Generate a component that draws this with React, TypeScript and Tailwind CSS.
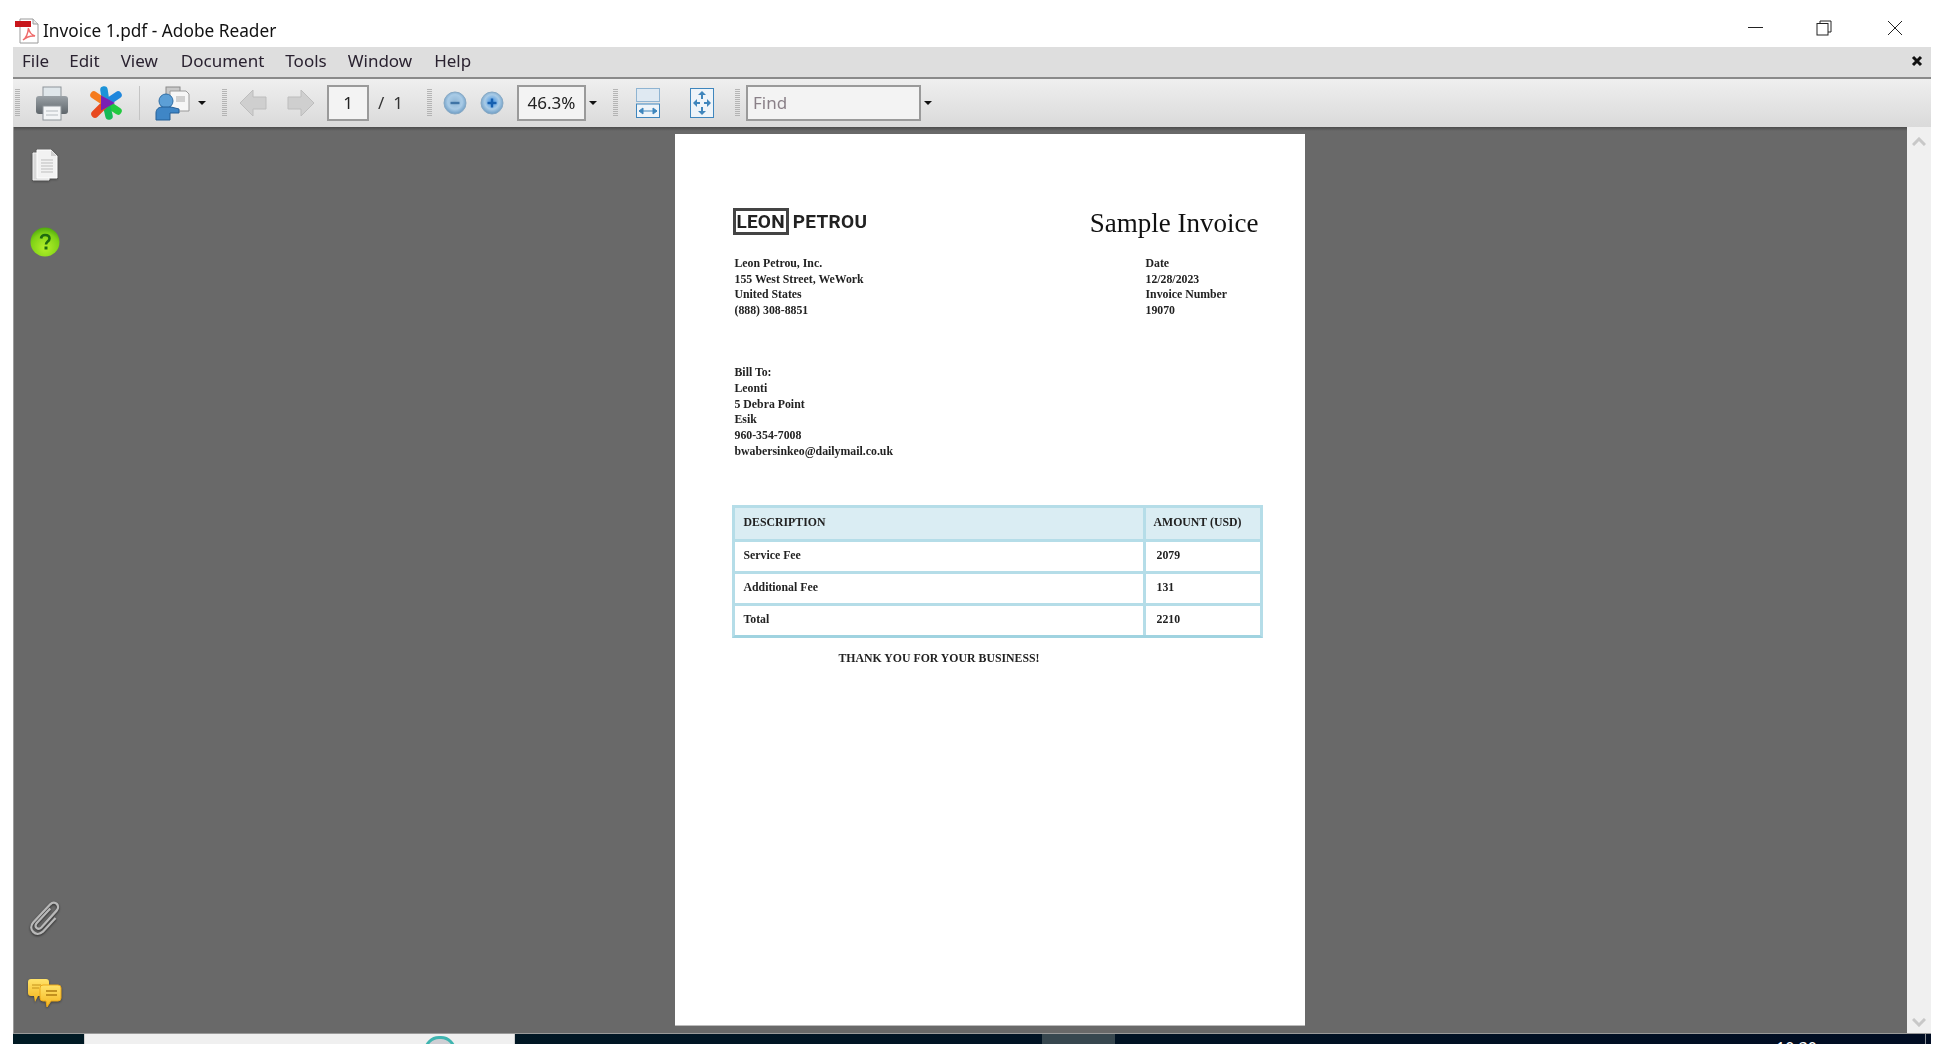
import { ReactNode } from "react";

const UI_FONT = "font-['Noto_Sans','Open_Sans',sans-serif]";
const DOC_FONT = "font-['Liberation_Serif',serif]";

const MENU_ITEMS = [
  { label: "File", margin: "ml-[9px]" },
  { label: "Edit", margin: "ml-[20px]" },
  { label: "View", margin: "ml-[21px]" },
  { label: "Document", margin: "ml-[23px]" },
  { label: "Tools", margin: "ml-[21px]" },
  { label: "Window", margin: "ml-[21px]" },
  { label: "Help", margin: "ml-[22px]" }
];

const SENDER_LINES = ["Leon Petrou, Inc.", "155 West Street, WeWork", "United States", "(888) 308-8851"];
const META_LINES = ["Date", "12/28/2023", "Invoice Number", "19070"];
const BILL_LINES = ["Bill To:", "Leonti", "5 Debra Point", "Esik", "960-354-7008", "bwabersinkeo@dailymail.co.uk"];
const FEE_ROWS = [
  { label: "Service Fee", amount: "2079" },
  { label: "Additional Fee", amount: "131" },
  { label: "Total", amount: "2210" }
];

const STAR_PETALS = [
  { x: 15, y: 4, color: "#1c93d8" },
  { x: 29, y: 9, color: "#1f86dc" },
  { x: 29, y: 25, color: "#22c93f" },
  { x: 20, y: 30, color: "#16b956" },
  { x: 6, y: 28, color: "#e8491f" },
  { x: 5, y: 9, color: "#f57c1f" }
];

function Grip({ className }: { className: string }) {
  return (
    <span
      className={`h-[27px] w-[5px] shrink-0 bg-[repeating-linear-gradient(0deg,#a8a8a8_0_1px,transparent_1px_2px)] opacity-80 ${className}`}
    />
  );
}

function Caret({ className }: { className: string }) {
  return <span className={`h-0 w-0 shrink-0 border-x-[4px] border-t-[4px] border-x-transparent border-t-[#111] ${className}`} />;
}

function PdfIcon() {
  return (
    <svg width="25" height="26" viewBox="0 0 25 26" className="shrink-0">
      <path d="M5 1h13l5 5v19H5z" fill="#fff" stroke="#9a9a9a" />
      <path d="M18 1v5h5" fill="#e8e8e8" stroke="#9a9a9a" />
      <rect x="0" y="3" width="16" height="6" fill="#c8151b" />
      <path
        d="M8 22c3-2 5-7 5.500-12 .5 4 2.500 6.500 6.500 8-4-.5-8 .5-12 4z"
        fill="none"
        stroke="#ef6b6b"
        strokeWidth="1.500"
      />
    </svg>
  );
}

function PrinterIcon() {
  return (
    <svg width="34" height="36" viewBox="0 0 34 36" className="ml-[15px] shrink-0">
      <defs>
        <linearGradient id="printerBody" x1="0" y1="0" x2="0" y2="1">
          <stop offset="0" stopColor="#9aa1a6" />
          <stop offset="1" stopColor="#5f666b" />
        </linearGradient>
      </defs>
      <rect x="8" y="2" width="18" height="12" fill="#dfe6ea" stroke="#8d9499" />
      <path d="M4 11h26a3 3 0 0 1 3 3v12a3 3 0 0 1-3 3H4a3 3 0 0 1-3-3V14a3 3 0 0 1 3-3z" fill="url(#printerBody)" />
      <rect x="8" y="21" width="18" height="14" fill="#f3f5f6" stroke="#8d9499" />
      <path d="M11 26h12M11 30h12" stroke="#b5bbbf" />
    </svg>
  );
}

function StarIcon() {
  return (
    <svg width="34" height="34" viewBox="0 0 34 34" className="ml-[20px] shrink-0">
      {STAR_PETALS.map((petal) => (
        <path
          key={petal.color}
          d={`M17 17L${petal.x} ${petal.y}`}
          stroke={petal.color}
          strokeWidth="7.500"
          strokeLinecap="round"
        />
      ))}
      <path d="M12 9.500 26 17l-14 7.500z" fill="#7a1fb4" />
    </svg>
  );
}

function ShareIcon() {
  return (
    <svg width="35" height="37" viewBox="0 0 35 37" className="ml-[15px] shrink-0">
      <rect x="11" y="3" width="14" height="9" fill="#c9c9c9" stroke="#8a8a8a" />
      <path d="M15 7h16l3 3v17H15z" fill="#f6f6f6" stroke="#9a9a9a" />
      <rect x="21" y="12" width="9" height="6" fill="#d0d0d0" />
      <circle cx="11" cy="17" r="7" fill="#5c9fd6" stroke="#2f6ea6" />
      <path d="M1 36v-7c0-4 3-6 6-6h9l8 2v4h-9v7z" fill="#3f86c6" stroke="#245f96" />
    </svg>
  );
}

function ArrowIcon({ flip, className }: { flip?: boolean; className: string }) {
  return (
    <svg
      width="28"
      height="28"
      viewBox="0 0 28 28"
      className={`shrink-0 ${flip ? "-scale-x-100" : ""} ${className}`}
    >
      <path d="M1 14 14 1v7h13v12H14v7z" fill="#cfcfcf" stroke="#bdbdbd" />
    </svg>
  );
}

function ZoomIcon({ plus, className }: { plus?: boolean; className: string }) {
  const gradientId = plus ? "zoomPlus" : "zoomMinus";
  return (
    <svg width="24" height="24" viewBox="0 0 24 24" className={`shrink-0 ${className}`}>
      <defs>
        <radialGradient id={gradientId} cx="0.5" cy="0.45" r="0.55">
          <stop offset="0" stopColor={plus ? "#3f8fe0" : "#8fb6d6"} />
          <stop offset="0.6" stopColor="#a9cbe6" />
          <stop offset="1" stopColor="#6d9cc4" />
        </radialGradient>
      </defs>
      <circle cx="12" cy="12" r="11" fill={`url(#${gradientId})`} stroke="#88a9c4" />
      <rect x="7.500" y="10.800" width="9" height="2.400" fill={plus ? "#155fb0" : "#3f74a6"} />
      {plus && <rect x="10.800" y="7.500" width="2.400" height="9" fill="#155fb0" />}
    </svg>
  );
}

function FitWidthIcon() {
  return (
    <svg width="24" height="30" viewBox="0 0 24 30" className="ml-[18px] shrink-0">
      <rect x="0.500" y="0.500" width="23" height="13" fill="#dfe9f2" stroke="#8fb4d2" />
      <rect x="0.500" y="16" width="23" height="13.500" fill="#eef4f9" stroke="#3f86bd" />
      <path d="M3 23h18M3 23l4-3v6zM21 23l-4-3v6z" fill="#3f86bd" stroke="#3f86bd" />
    </svg>
  );
}

function FitPageIcon() {
  return (
    <svg width="24" height="30" viewBox="0 0 24 30" className="ml-[30px] shrink-0">
      <rect x="0.500" y="0.500" width="23" height="29" fill="#eef4f9" stroke="#3f86bd" />
      <path
        d="M12 3l-4 4h3v4h2V7h3zM12 27l-4-4h3v-4h2v4h3zM3 15l4-4v3h3v2H7v3zM21 15l-4-4v3h-3v2h3v3z"
        fill="#3f86bd"
      />
    </svg>
  );
}

function Toolbar() {
  return (
    <div className="flex h-[48px] shrink-0 items-center bg-gradient-to-b from-[#efefef] to-[#dadada] pb-[1px] pl-[2px]">
      <Grip className="" />
      <PrinterIcon />
      <StarIcon />
      <span className="ml-[16px] h-[34px] w-px shrink-0 bg-[#c4c4c4]" />
      <ShareIcon />
      <Caret className="ml-[8px]" />
      <Grip className="ml-[16px]" />
      <ArrowIcon className="ml-[12px]" />
      <ArrowIcon flip className="ml-[20px]" />
      <span className="ml-[12px] flex h-[36px] w-[42px] shrink-0 items-center justify-center border-2 border-[#9a9a9a] bg-[#f3f3f3] text-[17px] text-[#222]">
        1
      </span>
      <span className="ml-[9px] w-[28px] shrink-0 whitespace-nowrap text-[17px] text-[#333]">/&nbsp;&nbsp;1</span>
      <Grip className="ml-[21px]" />
      <ZoomIcon className="ml-[11px]" />
      <ZoomIcon plus className="ml-[13px]" />
      <span className="ml-[13px] flex h-[36px] w-[69px] shrink-0 items-center justify-center border-2 border-[#9a9a9a] bg-[#f3f3f3] text-[17px] text-[#222]">
        46.3%
      </span>
      <Caret className="ml-[3px]" />
      <Grip className="ml-[16px]" />
      <FitWidthIcon />
      <FitPageIcon />
      <Grip className="ml-[21px]" />
      <span className="ml-[6px] flex h-[36px] w-[175px] shrink-0 items-center border-2 border-[#9a9a9a] bg-[#f3f3f3] pl-[5px] text-[17px] text-[#8a8088]">
        Find
      </span>
      <Caret className="ml-[3px]" />
    </div>
  );
}

function DocumentsIcon() {
  return (
    <svg width="26" height="32" viewBox="0 0 26 32" className="drop-shadow-[0_1px_1px_rgba(0,0,0,0.4)]">
      <path d="M1 4h16v27H1z" fill="#d8d8d8" stroke="#f4f4f4" />
      <path d="M5 1h14l6 6v22H5z" fill="#f2f2f2" stroke="#fff" />
      <path d="M19 1v6h6z" fill="#cfcfcf" />
      <path d="M9 11h12M9 14h12M9 17h12M9 20h12M9 23h12" stroke="#bdbdbd" />
    </svg>
  );
}

function HelpIcon() {
  return (
    <svg width="30" height="30" viewBox="0 0 30 30">
      <defs>
        <radialGradient id="helpGreen" cx="0.5" cy="0.7" r="0.7">
          <stop offset="0" stopColor="#b4f02a" />
          <stop offset="0.7" stopColor="#7fd216" />
          <stop offset="1" stopColor="#4fa80e" />
        </radialGradient>
      </defs>
      <circle cx="15" cy="15" r="14.500" fill="url(#helpGreen)" />
      <path
        d="M11 11.500c.4-2.500 2.200-3.500 4-3.500 2.700 0 4.500 1.500 4.500 3.500 0 3.200-3.500 3-3.500 6"
        fill="none"
        stroke="#1f6a10"
        strokeWidth="2.600"
      />
      <rect x="14.500" y="19.500" width="3" height="3" fill="#1f6a10" />
    </svg>
  );
}

function ClipIcon() {
  return (
    <svg width="34" height="40" viewBox="0 0 32 38" className="drop-shadow-[0_1px_1px_rgba(0,0,0,0.6)]">
      <path
        d="M21 10 8 24c-3 3.500 1.500 7 4.500 4L27 12c4-4.500-1.500-10.500-6-6L5 23c-6 6.500 2.500 15 9 9l12-13"
        fill="none"
        stroke="#b8b8b8"
        strokeWidth="2.200"
      />
    </svg>
  );
}

function ChatIcon() {
  return (
    <svg width="34" height="29" viewBox="0 0 34 29" className="drop-shadow-[0_1px_1px_rgba(0,0,0,0.4)]">
      <defs>
        <linearGradient id="chatFill" x1="0" y1="0" x2="0" y2="1">
          <stop offset="0" stopColor="#ffe36a" />
          <stop offset="1" stopColor="#f4b51e" />
        </linearGradient>
      </defs>
      <path d="M3 0h15a3 3 0 0 1 3 3v11a3 3 0 0 1-3 3H10l-3 6-1-6H3a3 3 0 0 1-3-3V3a3 3 0 0 1 3-3z" fill="url(#chatFill)" />
      <path d="M4 6h9M4 9h7" stroke="#c4921a" />
      <path d="M15 6h15a3 3 0 0 1 3 3v10a3 3 0 0 1-3 3h-7l-4 6-1-6h-3a3 3 0 0 1-3-3V9a3 3 0 0 1 3-3z" fill="url(#chatFill)" stroke="#eba91a" />
      <path d="M18 12h11M18 16h11" stroke="#b07c10" strokeWidth="1.500" />
    </svg>
  );
}

function LogoMark() {
  return (
    <div className="flex items-center font-['Roboto',sans-serif] text-[19px] leading-[19px] font-bold text-[#222]">
      <span className="border-[3px] border-[#444] p-[1px] tracking-[0.2px]">LEON</span>
      <span className="ml-[4px] tracking-[0.3px]">PETROU</span>
    </div>
  );
}

function DocLine({ children, className }: { children: ReactNode; className: string }) {
  return <p className={`whitespace-nowrap text-[11.800px] font-bold text-[#222] ${className}`}>{children}</p>;
}

function FeeRow({ label, amount }: { label: string; amount: string }) {
  return (
    <div className="flex h-[32px] border-t-[3px] border-[#b5dde8]">
      <div className="flex w-[411px] items-center border-r-[3px] border-[#b5dde8] pl-[9px]">
        <DocLine className="">{label}</DocLine>
      </div>
      <div className="flex flex-1 items-center pl-[11px]">
        <DocLine className="">{amount}</DocLine>
      </div>
    </div>
  );
}

function InvoicePage() {
  return (
    <div className={`h-[892px] w-[630px] shrink-0 border-b border-[#bbb] bg-white pt-[73px] pl-[58px] text-[#222] ${DOC_FONT}`}>
      <div className="blur-[0.45px]">
        <div className="flex h-[28px] items-center justify-between pr-[46px]">
          <LogoMark />
          <h1 className="mt-[5px] text-[27px] leading-none font-medium whitespace-nowrap text-[#111]">Sample Invoice</h1>
        </div>

        <div className="mt-[21px] flex pl-[2px]">
          <div className="w-[411px]">
            {SENDER_LINES.map((line) => (
              <DocLine key={line} className="leading-[15.500px]">
                {line}
              </DocLine>
            ))}
          </div>
          <div>
            {META_LINES.map((line) => (
              <DocLine key={line} className="leading-[15.500px]">
                {line}
              </DocLine>
            ))}
          </div>
        </div>

        <div className="mt-[47px] pl-[2px]">
          {BILL_LINES.map((line) => (
            <DocLine key={line} className="leading-[15.800px]">
              {line}
            </DocLine>
          ))}
        </div>

        <div className="mt-[45px] -ml-px w-[531px] border-[3px] border-[#b5dde8] border-b-[#a0d3e0]">
          <div className="flex h-[31px] bg-[#daedf3]">
            <div className="flex w-[411px] items-center border-r-[3px] border-[#b5dde8] pl-[9px]">
              <DocLine className="">DESCRIPTION</DocLine>
            </div>
            <div className="flex flex-1 items-center pl-[8px]">
              <DocLine className="">AMOUNT (USD)</DocLine>
            </div>
          </div>
          {FEE_ROWS.map((row) => (
            <FeeRow key={row.label} label={row.label} amount={row.amount} />
          ))}
        </div>

        <DocLine className="mt-[13px] ml-[106px] leading-[15px]">THANK YOU FOR YOUR BUSINESS!</DocLine>
      </div>
    </div>
  );
}

function Taskbar() {
  return (
    <div className="flex h-[11px] shrink-0 overflow-hidden border-t border-[#9a9a9a] bg-gradient-to-r from-[#001a24] to-[#000c22]">
      <div className="w-[71px] shrink-0" />
      <div className="flex w-[431px] shrink-0 justify-end overflow-hidden border-x border-[#cfcfcf] bg-[#f0f0f0] pr-[58px]">
        <span className="mt-[2px] h-[30px] w-[32px] rounded-full border-[3px] border-[#3fb5b0] bg-[#cfcfd4]" />
      </div>
      <div className="w-[527px] shrink-0" />
      <div className="w-[73px] shrink-0 bg-[#37474f]" />
      <div className="flex flex-1 justify-end pr-[108px]">
        <span className="mt-[6px] text-[16px] leading-none text-white">10:30</span>
      </div>
      <div className="mr-[5px] w-px shrink-0 bg-[#8a8f96]" />
    </div>
  );
}

export default function App() {
  return (
    <div className={`flex h-screen w-full flex-col overflow-hidden bg-white px-[13px] ${UI_FONT}`}>
      <div className="relative flex h-[47px] shrink-0 items-end pb-[3px]">
        <div className="flex items-center gap-[3px] pl-[2px] blur-[0.3px]">
          <PdfIcon />
          <span className="text-[17.250px] leading-[26px] text-[#111]">Invoice 1.pdf - Adobe Reader</span>
        </div>
        <div className="absolute top-[20px] right-0 flex items-center">
          <svg width="16" height="2" viewBox="0 0 16 2" className="mr-[52px]">
            <rect width="15" height="1" fill="#222" />
          </svg>
          <svg width="16" height="16" viewBox="0 0 16 16" className="mr-[55px]">
            <path d="M4 3V1h11v11h-3" fill="none" stroke="#222" />
            <rect x="1" y="3.500" width="11" height="11.500" fill="none" stroke="#222" />
          </svg>
          <svg width="16" height="16" viewBox="0 0 16 16" className="mr-[28px]">
            <path d="M1 1l14 14M15 1 1 15" stroke="#222" />
          </svg>
        </div>
      </div>

      <div className="flex h-[32px] shrink-0 items-center justify-between border-b-2 border-[#8a8a8a] bg-[#dedede] pr-[8px] pb-[3px] text-[17px] text-[#2a2230] blur-[0.3px]">
        <div className="flex items-center">
          {MENU_ITEMS.map((item) => (
            <span key={item.label} className={item.margin}>
              {item.label}
            </span>
          ))}
        </div>
        <svg width="12" height="12" viewBox="0 0 12 12">
          <path d="M2 2l8 8M10 2l-8 8" stroke="#111" strokeWidth="3" />
        </svg>
      </div>

      <div className="blur-[0.3px]">
        <Toolbar />
      </div>

      <div className="flex min-h-0 flex-1 border-l border-[#9a9a9a] bg-[#696969] bg-[linear-gradient(#4c4c4c,#696969_4px)]">
        <aside className="flex w-[58px] shrink-0 flex-col items-center justify-between pt-[22px] pb-[25px] pl-[3px] blur-[0.4px]">
          <div className="flex flex-col items-center gap-[46px]">
            <DocumentsIcon />
            <HelpIcon />
          </div>
          <div className="flex flex-col items-center gap-[41px]">
            <ClipIcon />
            <ChatIcon />
          </div>
        </aside>
        <main className="flex min-w-0 flex-1 justify-center overflow-hidden pt-[7px]">
          <InvoicePage />
        </main>
        <div className="flex w-[24px] shrink-0 flex-col items-center justify-between bg-[#f0f0f0] pt-[10px] pb-[6px]">
          <svg width="14" height="9" viewBox="0 0 14 9">
            <path d="M1 8l6-6 6 6" fill="none" stroke="#c8c8c8" strokeWidth="3" />
          </svg>
          <svg width="14" height="9" viewBox="0 0 14 9">
            <path d="M1 1l6 6 6-6" fill="none" stroke="#c8c8c8" strokeWidth="3" />
          </svg>
        </div>
      </div>

      <Taskbar />
    </div>
  );
}
